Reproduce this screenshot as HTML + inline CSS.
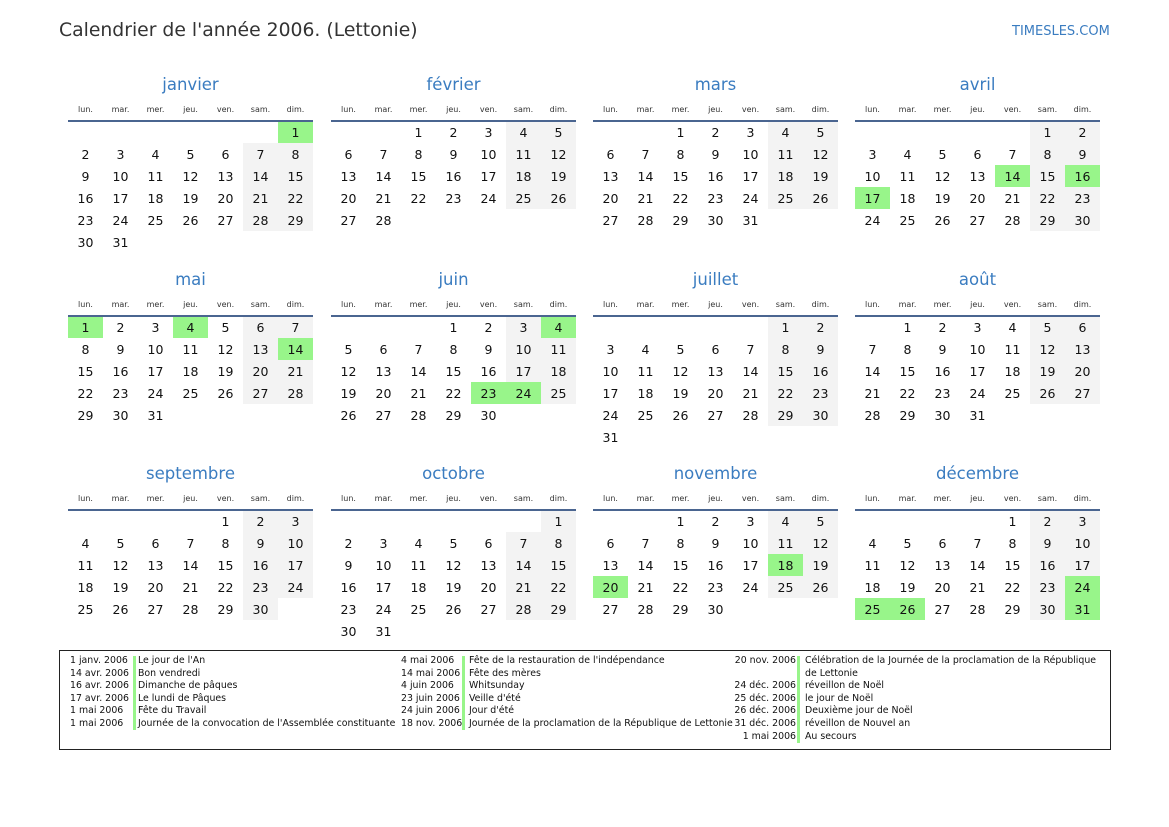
<!DOCTYPE html>
<html><head><meta charset="utf-8"><style>
*{margin:0;padding:0;box-sizing:border-box}
body{width:1169px;height:827px;background:#fff;font-family:"DejaVu Sans","Liberation Sans",sans-serif;color:#111;position:relative;overflow:hidden}
.t{position:absolute;left:59px;top:20px;font-size:18.8px;color:#333}
.logo{position:absolute;left:1012px;top:24px;font-size:13px;color:#3a7cc0}
.m{position:absolute;width:245px}
.m h2{font-weight:normal;font-size:16.5px;color:#3a7cc0;text-align:center;height:28px;line-height:28px}
table{border-collapse:collapse;table-layout:fixed;width:245px}
th{font-weight:normal;font-size:8px;color:#333;height:22px;width:35px;border-bottom:2px solid #4a6590;vertical-align:middle}
td{height:22px;width:35px;text-align:center;font-size:12.5px;padding:0}
td.w{background:#f3f3f3}
td.h{background:#98f58a}
.lg{position:absolute;left:59px;top:650px;width:1052px;height:100px;border:1px solid #222}
.c{position:absolute;font-size:9.4px;line-height:12.6px;white-space:nowrap;color:#111}
.b{position:absolute;width:3px;background:#98f58a}
</style></head><body>
<div class="t">Calendrier de l'année 2006. (Lettonie)</div>
<div class="logo">TIMESLES.COM</div>

<div class="m" style="left:68px;top:71px"><h2>janvier</h2><table>
<tr><th>lun.</th><th>mar.</th><th>mer.</th><th>jeu.</th><th>ven.</th><th>sam.</th><th>dim.</th></tr>
<tr><td></td><td></td><td></td><td></td><td></td><td></td><td class="h">1</td></tr>
<tr><td>2</td><td>3</td><td>4</td><td>5</td><td>6</td><td class="w">7</td><td class="w">8</td></tr>
<tr><td>9</td><td>10</td><td>11</td><td>12</td><td>13</td><td class="w">14</td><td class="w">15</td></tr>
<tr><td>16</td><td>17</td><td>18</td><td>19</td><td>20</td><td class="w">21</td><td class="w">22</td></tr>
<tr><td>23</td><td>24</td><td>25</td><td>26</td><td>27</td><td class="w">28</td><td class="w">29</td></tr>
<tr><td>30</td><td>31</td><td></td><td></td><td></td><td></td><td></td></tr></table></div>

<div class="m" style="left:331px;top:71px"><h2>février</h2><table>
<tr><th>lun.</th><th>mar.</th><th>mer.</th><th>jeu.</th><th>ven.</th><th>sam.</th><th>dim.</th></tr>
<tr><td></td><td></td><td>1</td><td>2</td><td>3</td><td class="w">4</td><td class="w">5</td></tr>
<tr><td>6</td><td>7</td><td>8</td><td>9</td><td>10</td><td class="w">11</td><td class="w">12</td></tr>
<tr><td>13</td><td>14</td><td>15</td><td>16</td><td>17</td><td class="w">18</td><td class="w">19</td></tr>
<tr><td>20</td><td>21</td><td>22</td><td>23</td><td>24</td><td class="w">25</td><td class="w">26</td></tr>
<tr><td>27</td><td>28</td><td></td><td></td><td></td><td></td><td></td></tr></table></div>

<div class="m" style="left:593px;top:71px"><h2>mars</h2><table>
<tr><th>lun.</th><th>mar.</th><th>mer.</th><th>jeu.</th><th>ven.</th><th>sam.</th><th>dim.</th></tr>
<tr><td></td><td></td><td>1</td><td>2</td><td>3</td><td class="w">4</td><td class="w">5</td></tr>
<tr><td>6</td><td>7</td><td>8</td><td>9</td><td>10</td><td class="w">11</td><td class="w">12</td></tr>
<tr><td>13</td><td>14</td><td>15</td><td>16</td><td>17</td><td class="w">18</td><td class="w">19</td></tr>
<tr><td>20</td><td>21</td><td>22</td><td>23</td><td>24</td><td class="w">25</td><td class="w">26</td></tr>
<tr><td>27</td><td>28</td><td>29</td><td>30</td><td>31</td><td></td><td></td></tr></table></div>

<div class="m" style="left:855px;top:71px"><h2>avril</h2><table>
<tr><th>lun.</th><th>mar.</th><th>mer.</th><th>jeu.</th><th>ven.</th><th>sam.</th><th>dim.</th></tr>
<tr><td></td><td></td><td></td><td></td><td></td><td class="w">1</td><td class="w">2</td></tr>
<tr><td>3</td><td>4</td><td>5</td><td>6</td><td>7</td><td class="w">8</td><td class="w">9</td></tr>
<tr><td>10</td><td>11</td><td>12</td><td>13</td><td class="h">14</td><td class="w">15</td><td class="h">16</td></tr>
<tr><td class="h">17</td><td>18</td><td>19</td><td>20</td><td>21</td><td class="w">22</td><td class="w">23</td></tr>
<tr><td>24</td><td>25</td><td>26</td><td>27</td><td>28</td><td class="w">29</td><td class="w">30</td></tr></table></div>

<div class="m" style="left:68px;top:266px"><h2>mai</h2><table>
<tr><th>lun.</th><th>mar.</th><th>mer.</th><th>jeu.</th><th>ven.</th><th>sam.</th><th>dim.</th></tr>
<tr><td class="h">1</td><td>2</td><td>3</td><td class="h">4</td><td>5</td><td class="w">6</td><td class="w">7</td></tr>
<tr><td>8</td><td>9</td><td>10</td><td>11</td><td>12</td><td class="w">13</td><td class="h">14</td></tr>
<tr><td>15</td><td>16</td><td>17</td><td>18</td><td>19</td><td class="w">20</td><td class="w">21</td></tr>
<tr><td>22</td><td>23</td><td>24</td><td>25</td><td>26</td><td class="w">27</td><td class="w">28</td></tr>
<tr><td>29</td><td>30</td><td>31</td><td></td><td></td><td></td><td></td></tr></table></div>

<div class="m" style="left:331px;top:266px"><h2>juin</h2><table>
<tr><th>lun.</th><th>mar.</th><th>mer.</th><th>jeu.</th><th>ven.</th><th>sam.</th><th>dim.</th></tr>
<tr><td></td><td></td><td></td><td>1</td><td>2</td><td class="w">3</td><td class="h">4</td></tr>
<tr><td>5</td><td>6</td><td>7</td><td>8</td><td>9</td><td class="w">10</td><td class="w">11</td></tr>
<tr><td>12</td><td>13</td><td>14</td><td>15</td><td>16</td><td class="w">17</td><td class="w">18</td></tr>
<tr><td>19</td><td>20</td><td>21</td><td>22</td><td class="h">23</td><td class="h">24</td><td class="w">25</td></tr>
<tr><td>26</td><td>27</td><td>28</td><td>29</td><td>30</td><td></td><td></td></tr></table></div>

<div class="m" style="left:593px;top:266px"><h2>juillet</h2><table>
<tr><th>lun.</th><th>mar.</th><th>mer.</th><th>jeu.</th><th>ven.</th><th>sam.</th><th>dim.</th></tr>
<tr><td></td><td></td><td></td><td></td><td></td><td class="w">1</td><td class="w">2</td></tr>
<tr><td>3</td><td>4</td><td>5</td><td>6</td><td>7</td><td class="w">8</td><td class="w">9</td></tr>
<tr><td>10</td><td>11</td><td>12</td><td>13</td><td>14</td><td class="w">15</td><td class="w">16</td></tr>
<tr><td>17</td><td>18</td><td>19</td><td>20</td><td>21</td><td class="w">22</td><td class="w">23</td></tr>
<tr><td>24</td><td>25</td><td>26</td><td>27</td><td>28</td><td class="w">29</td><td class="w">30</td></tr>
<tr><td>31</td><td></td><td></td><td></td><td></td><td></td><td></td></tr></table></div>

<div class="m" style="left:855px;top:266px"><h2>août</h2><table>
<tr><th>lun.</th><th>mar.</th><th>mer.</th><th>jeu.</th><th>ven.</th><th>sam.</th><th>dim.</th></tr>
<tr><td></td><td>1</td><td>2</td><td>3</td><td>4</td><td class="w">5</td><td class="w">6</td></tr>
<tr><td>7</td><td>8</td><td>9</td><td>10</td><td>11</td><td class="w">12</td><td class="w">13</td></tr>
<tr><td>14</td><td>15</td><td>16</td><td>17</td><td>18</td><td class="w">19</td><td class="w">20</td></tr>
<tr><td>21</td><td>22</td><td>23</td><td>24</td><td>25</td><td class="w">26</td><td class="w">27</td></tr>
<tr><td>28</td><td>29</td><td>30</td><td>31</td><td></td><td></td><td></td></tr></table></div>

<div class="m" style="left:68px;top:460px"><h2>septembre</h2><table>
<tr><th>lun.</th><th>mar.</th><th>mer.</th><th>jeu.</th><th>ven.</th><th>sam.</th><th>dim.</th></tr>
<tr><td></td><td></td><td></td><td></td><td>1</td><td class="w">2</td><td class="w">3</td></tr>
<tr><td>4</td><td>5</td><td>6</td><td>7</td><td>8</td><td class="w">9</td><td class="w">10</td></tr>
<tr><td>11</td><td>12</td><td>13</td><td>14</td><td>15</td><td class="w">16</td><td class="w">17</td></tr>
<tr><td>18</td><td>19</td><td>20</td><td>21</td><td>22</td><td class="w">23</td><td class="w">24</td></tr>
<tr><td>25</td><td>26</td><td>27</td><td>28</td><td>29</td><td class="w">30</td><td></td></tr></table></div>

<div class="m" style="left:331px;top:460px"><h2>octobre</h2><table>
<tr><th>lun.</th><th>mar.</th><th>mer.</th><th>jeu.</th><th>ven.</th><th>sam.</th><th>dim.</th></tr>
<tr><td></td><td></td><td></td><td></td><td></td><td></td><td class="w">1</td></tr>
<tr><td>2</td><td>3</td><td>4</td><td>5</td><td>6</td><td class="w">7</td><td class="w">8</td></tr>
<tr><td>9</td><td>10</td><td>11</td><td>12</td><td>13</td><td class="w">14</td><td class="w">15</td></tr>
<tr><td>16</td><td>17</td><td>18</td><td>19</td><td>20</td><td class="w">21</td><td class="w">22</td></tr>
<tr><td>23</td><td>24</td><td>25</td><td>26</td><td>27</td><td class="w">28</td><td class="w">29</td></tr>
<tr><td>30</td><td>31</td><td></td><td></td><td></td><td></td><td></td></tr></table></div>

<div class="m" style="left:593px;top:460px"><h2>novembre</h2><table>
<tr><th>lun.</th><th>mar.</th><th>mer.</th><th>jeu.</th><th>ven.</th><th>sam.</th><th>dim.</th></tr>
<tr><td></td><td></td><td>1</td><td>2</td><td>3</td><td class="w">4</td><td class="w">5</td></tr>
<tr><td>6</td><td>7</td><td>8</td><td>9</td><td>10</td><td class="w">11</td><td class="w">12</td></tr>
<tr><td>13</td><td>14</td><td>15</td><td>16</td><td>17</td><td class="h">18</td><td class="w">19</td></tr>
<tr><td class="h">20</td><td>21</td><td>22</td><td>23</td><td>24</td><td class="w">25</td><td class="w">26</td></tr>
<tr><td>27</td><td>28</td><td>29</td><td>30</td><td></td><td></td><td></td></tr></table></div>

<div class="m" style="left:855px;top:460px"><h2>décembre</h2><table>
<tr><th>lun.</th><th>mar.</th><th>mer.</th><th>jeu.</th><th>ven.</th><th>sam.</th><th>dim.</th></tr>
<tr><td></td><td></td><td></td><td></td><td>1</td><td class="w">2</td><td class="w">3</td></tr>
<tr><td>4</td><td>5</td><td>6</td><td>7</td><td>8</td><td class="w">9</td><td class="w">10</td></tr>
<tr><td>11</td><td>12</td><td>13</td><td>14</td><td>15</td><td class="w">16</td><td class="w">17</td></tr>
<tr><td>18</td><td>19</td><td>20</td><td>21</td><td>22</td><td class="w">23</td><td class="h">24</td></tr>
<tr><td class="h">25</td><td class="h">26</td><td>27</td><td>28</td><td>29</td><td class="w">30</td><td class="h">31</td></tr></table></div>

<div class="lg"></div>
<div class="c" style="left:70px;top:655px">1 janv. 2006<br>14 avr. 2006<br>16 avr. 2006<br>17 avr. 2006<br>1 mai 2006<br>1 mai 2006</div>
<div class="b" style="left:133px;top:656px;height:74px"></div>
<div class="c" style="left:138px;top:655px">Le jour de l'An<br>Bon vendredi<br>Dimanche de pâques<br>Le lundi de Pâques<br>Fête du Travail<br>Journée de la convocation de l'Assemblée constituante</div>
<div class="c" style="left:401px;top:655px">4 mai 2006<br>14 mai 2006<br>4 juin 2006<br>23 juin 2006<br>24 juin 2006<br>18 nov. 2006</div>
<div class="b" style="left:462px;top:656px;height:74px"></div>
<div class="c" style="left:469px;top:655px">Fête de la restauration de l'indépendance<br>Fête des mères<br>Whitsunday<br>Veille d'été<br>Jour d'été<br>Journée de la proclamation de la République de Lettonie</div>
<div class="c" style="left:730px;top:655px;width:66px;text-align:right">20 nov. 2006<br><br>24 déc. 2006<br>25 déc. 2006<br>26 déc. 2006<br>31 déc. 2006<br>1 mai 2006</div>
<div class="b" style="left:797px;top:656px;height:87px"></div>
<div class="c" style="left:805px;top:655px">Célébration de la Journée de la proclamation de la République<br>de Lettonie<br>réveillon de Noël<br>le jour de Noël<br>Deuxième jour de Noël<br>réveillon de Nouvel an<br>Au secours</div>
</body></html>
